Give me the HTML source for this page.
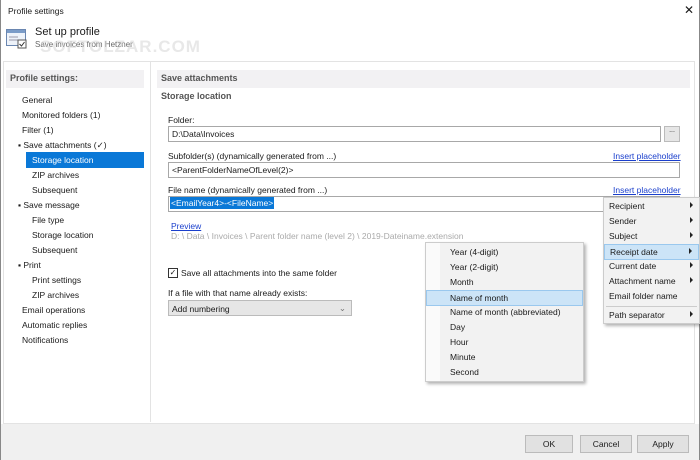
<!DOCTYPE html>
<html><head><style>
*{margin:0;padding:0;box-sizing:border-box}
body{width:700px;height:460px;overflow:hidden;background:#fff;font-family:"Liberation Sans",sans-serif;font-size:8.5px;color:#1a1a1a;position:relative}
.a{position:absolute;white-space:nowrap}
.inp{position:absolute;border:1px solid #a8a8a8;background:#fff;height:16px;padding:2px 3px}
.lnk{color:#1a3fcc;text-decoration:underline}
.mi{position:absolute;left:0;right:0;height:15px;padding-top:2px}
.hl{background:#cce4f7;border:1px solid #9ac8ee}
.arr{position:absolute;right:6px;top:3px;width:0;height:0;border-left:3px solid #222;border-top:3px solid transparent;border-bottom:3px solid transparent}
</style></head><body>
<div class="a" style="left:0;top:0;width:700px;height:460px;border:1px solid #888;border-top:none"></div>
<div class="a" style="left:8px;top:6px;font-size:8.5px">Profile settings</div>
<div class="a" style="left:684px;top:3px;font-size:12px">✕</div>
<svg class="a" style="left:6px;top:29px" width="22" height="20"><rect x="0.5" y="0.5" width="19" height="16" fill="#eef3fa" stroke="#6a86b0"/><rect x="1" y="1" width="18" height="3" fill="#7b9cc8"/><line x1="3" y1="8" x2="12" y2="8" stroke="#99a"/><line x1="3" y1="11" x2="12" y2="11" stroke="#99a"/><rect x="12" y="11" width="8" height="8" fill="#fff" stroke="#555"/><path d="M13.5 15 l2 2 l3-4" stroke="#333" fill="none"/></svg>
<div class="a" style="left:35px;top:26px;font-size:11px">Set up profile</div>
<div class="a" style="left:35px;top:40px;font-size:8px;color:#666">Save invoices from Hetzner</div>
<div class="a" style="left:40px;top:37px;font-size:17px;color:rgba(210,210,210,.5);font-weight:bold;letter-spacing:1px">SOFTOLZAR.COM</div>
<div class="a" style="left:3px;top:61px;width:692px;height:363px;border:1px solid #e3e3e3;background:#fff"></div>
<div class="a" style="left:150px;top:62px;width:1px;height:360px;background:#e3e3e3"></div>
<div class="a" style="left:6px;top:70px;width:138px;height:18px;background:#f2f1f3"></div>
<div class="a" style="left:10px;top:73px;font-weight:bold;font-size:9px;color:#555">Profile settings:</div>
<div class="a" style="left:157px;top:70px;width:533px;height:18px;background:#f2f1f3"></div>
<div class="a" style="left:161px;top:73px;font-weight:bold;font-size:9px;color:#555">Save attachments</div>
<div class="a" style="left:161px;top:91px;font-weight:bold;font-size:9px;color:#555">Storage location</div>
<div class="a" style="left:26px;top:152px;width:118px;height:16px;background:#0a78d7"></div>
<div class="a" style="left:22px;top:93px;line-height:15px">General<br>Monitored folders (1)<br>Filter (1)<br><span style="margin-left:-4px">▪ Save attachments (✓)</span><br><span style="margin-left:10px;color:#fff">Storage location</span><br><span style="margin-left:10px">ZIP archives</span><br><span style="margin-left:10px">Subsequent</span><br><span style="margin-left:-4px">▪ Save message</span><br><span style="margin-left:10px">File type</span><br><span style="margin-left:10px">Storage location</span><br><span style="margin-left:10px">Subsequent</span><br><span style="margin-left:-4px">▪ Print</span><br><span style="margin-left:10px">Print settings</span><br><span style="margin-left:10px">ZIP archives</span><br>Email operations<br>Automatic replies<br>Notifications</div>
<div class="a" style="left:168px;top:115px">Folder:</div>
<div class="inp" style="left:168px;top:126px;width:493px">D:\Data\Invoices</div>
<div class="a" style="left:664px;top:126px;width:16px;height:16px;border:1px solid #bbb;background:#e6e6e6;text-align:center;font-size:7px">...</div>
<div class="a" style="left:168px;top:151px">Subfolder(s) (dynamically generated from ...)</div>
<div class="a lnk" style="left:613px;top:151px">Insert placeholder</div>
<div class="inp" style="left:168px;top:162px;width:512px">&lt;ParentFolderNameOfLevel(2)&gt;</div>
<div class="a" style="left:168px;top:185px">File name (dynamically generated from ...)</div>
<div class="a lnk" style="left:613px;top:185px">Insert placeholder</div>
<div class="inp" style="left:168px;top:196px;width:512px;padding:1px 1px"><span style="background:#0a78d7;color:#fff;padding:1px 1px">&lt;EmailYear4&gt;-&lt;FileName&gt;</span></div>
<div class="a lnk" style="left:171px;top:221px">Preview</div>
<div class="a" style="left:171px;top:231px;color:#aaa">D: \ Data \ Invoices \ Parent folder name (level 2) \ 2019-Dateiname.extension</div>
<div class="a" style="left:168px;top:268px;width:10px;height:10px;border:1px solid #333;font-size:8px;line-height:8px;text-align:center">✓</div>
<div class="a" style="left:181px;top:268px">Save all attachments into the same folder</div>
<div class="a" style="left:168px;top:288px">If a file with that name already exists:</div>
<div class="a" style="left:168px;top:300px;width:184px;height:16px;border:1px solid #bbb;background:#e6e6e6;padding:3px 3px">Add numbering<span style="position:absolute;right:5px;top:2px;color:#777">⌄</span></div>
<div class="a" style="left:603px;top:197px;width:97px;height:127px;background:#f2f2f2;border:1px solid #ccc;box-shadow:2px 2px 3px rgba(0,0,0,.3)">
<div class="mi" style="top:1px;padding-left:5px">Recipient<i class="arr"></i></div>
<div class="mi" style="top:16px;padding-left:5px">Sender<i class="arr"></i></div>
<div class="mi" style="top:31px;padding-left:5px">Subject<i class="arr"></i></div>
<div class="mi hl" style="top:46px;padding-left:5px;height:16px">Receipt date<i class="arr"></i></div>
<div class="mi" style="top:61px;padding-left:5px">Current date<i class="arr"></i></div>
<div class="mi" style="top:76px;padding-left:5px">Attachment name<i class="arr"></i></div>
<div class="mi" style="top:91px;padding-left:5px">Email folder name</div>
<div class="a" style="left:2px;right:2px;top:108px;height:1px;background:#ccc"></div>
<div class="mi" style="top:110px;padding-left:5px">Path separator<i class="arr"></i></div>
</div>
<div class="a" style="left:425px;top:242px;width:159px;height:140px;background:#f2f2f2;border:1px solid #ccc;box-shadow:2px 2px 3px rgba(0,0,0,.3)">
<div class="a" style="left:0;top:0;width:14px;height:138px;background:#fafafa"></div>
<div class="mi" style="top:2px;padding-left:24px">Year (4-digit)</div>
<div class="mi" style="top:17px;padding-left:24px">Year (2-digit)</div>
<div class="mi" style="top:32px;padding-left:24px">Month</div>
<div class="mi hl" style="top:47px;padding-left:23px;height:16px">Name of month</div>
<div class="mi" style="top:62px;padding-left:24px">Name of month (abbreviated)</div>
<div class="mi" style="top:77px;padding-left:24px">Day</div>
<div class="mi" style="top:92px;padding-left:24px">Hour</div>
<div class="mi" style="top:107px;padding-left:24px">Minute</div>
<div class="mi" style="top:122px;padding-left:24px">Second</div>
</div>
<div class="a" style="left:1px;top:424px;width:698px;height:36px;background:#f0f0f0"></div>
<div class="a" style="left:525px;top:435px;width:48px;height:18px;border:1px solid #bbb;background:#e1e1e1;text-align:center;padding-top:3px">OK</div>
<div class="a" style="left:580px;top:435px;width:52px;height:18px;border:1px solid #bbb;background:#e1e1e1;text-align:center;padding-top:3px">Cancel</div>
<div class="a" style="left:637px;top:435px;width:52px;height:18px;border:1px solid #bbb;background:#e1e1e1;text-align:center;padding-top:3px">Apply</div>
</body></html>
